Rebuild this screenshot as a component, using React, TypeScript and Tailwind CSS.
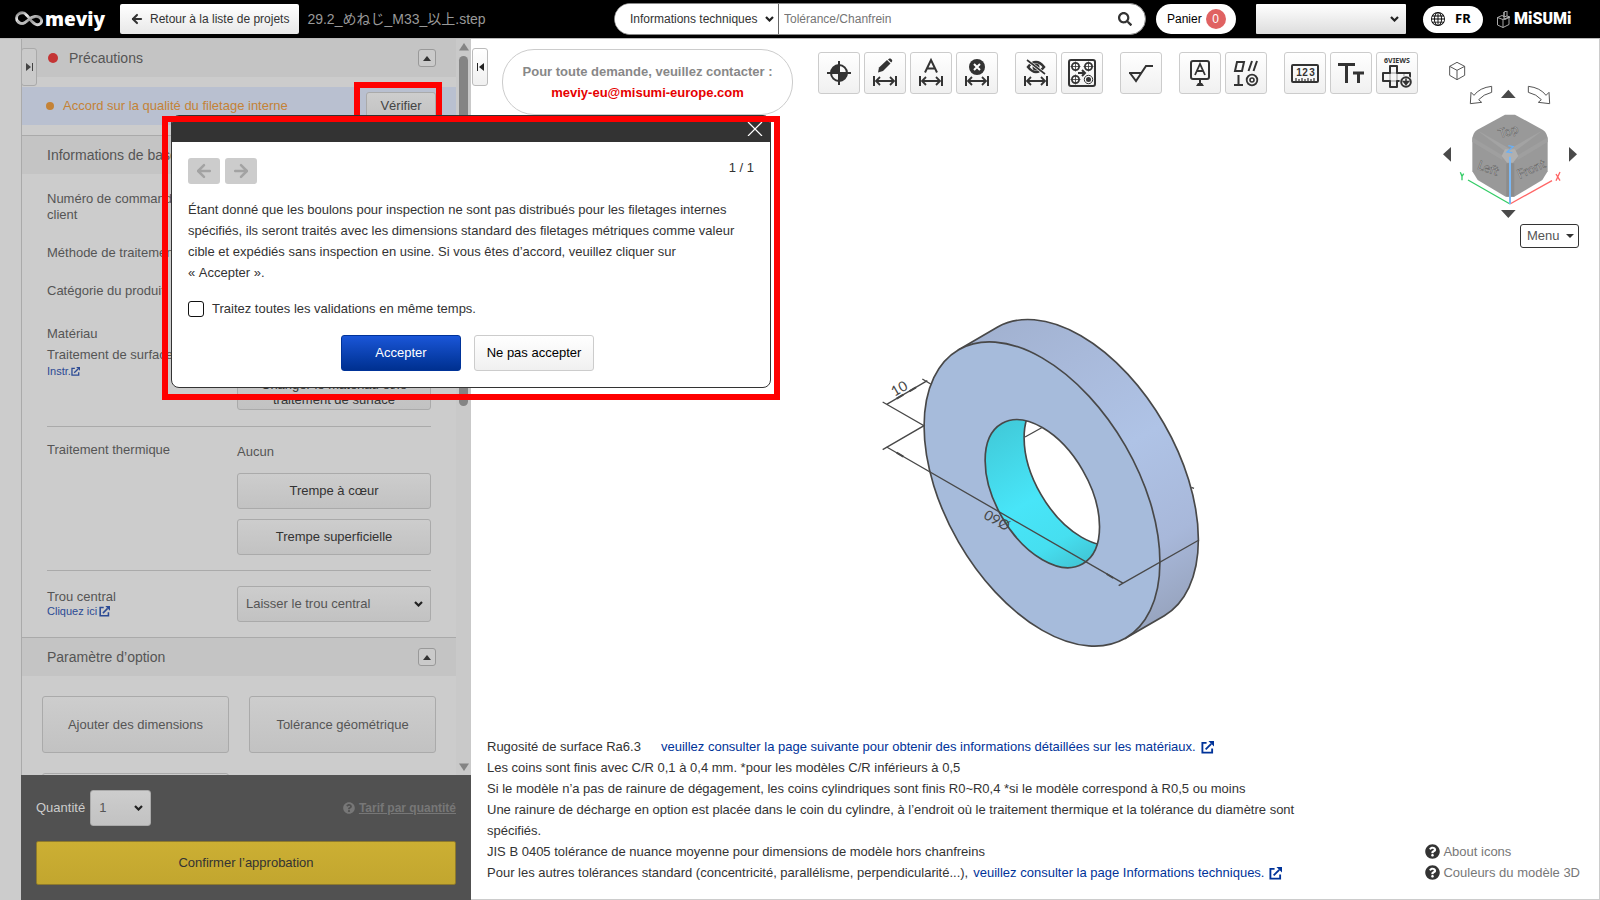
import React from 'react';
import { ArrowLeft, ArrowRight } from 'lucide-react';
import { FaQuestionCircle, FaSearch } from 'react-icons/fa';
import { BsGlobe } from 'react-icons/bs';

const INK = '#333333';

interface ToolButtonProps {
  label: string;
  children: React.ReactNode;
}

const ToolButton: React.FC<ToolButtonProps> = ({ label, children }) => (
  <button
    type="button"
    aria-label={label}
    className="w-[42px] h-[42px] shrink-0 rounded-[3px] border border-[#cccccc] bg-linear-to-b from-white to-[#f0f0f0]"
  >
    <svg viewBox="0 0 40 40" className="w-10 h-10" fill="none" stroke={INK} strokeWidth="2">
      {children}
    </svg>
  </button>
);

// Double-headed dimension arrow shared by several tools
const Span: React.FC = () => (
  <g strokeWidth="1.8">
    <path d="M9 23v10M31 23v10" strokeWidth="2" />
    <path d="M11 28h18M15 24l-4 4 4 4M25 24l4 4-4 4" />
  </g>
);

const MiniTarget: React.FC<{ x: number; y: number }> = ({ x, y }) => (
  <g strokeWidth="1.2">
    <circle cx={x} cy={y} r="3.6" strokeWidth="1.8" />
    <path d={`M${x - 5} ${y}h10M${x} ${y - 5}v10`} strokeWidth="0.8" />
  </g>
);

const ExternalIcon: React.FC<{ className: string }> = ({ className }) => (
  <svg viewBox="0 0 14 14" className={className} fill="none" stroke="currentColor" strokeWidth="2" aria-hidden="true">
    <path d="M6 2H1.500v10.500H12V8" />
    <path d="M5 9l6-6" />
    <path d="M8 0h6v6z" fill="currentColor" stroke="none" />
  </svg>
);

interface SelectProps {
  option: string;
  className: string;
  chevronClass: string;
  id?: string;
  label?: string;
}

const Select: React.FC<SelectProps> = ({ option, className, chevronClass, id, label }) => (
  <span className="relative flex shrink-0 items-center">
    <select id={id} aria-label={label} className={`appearance-none ${className}`}>
      <option>{option}</option>
    </select>
    <svg
      viewBox="0 0 9 6"
      className={`pointer-events-none absolute h-[6px] w-[9px] ${chevronClass}`}
      fill="none"
      stroke="#222"
      strokeWidth="2.2"
      aria-hidden="true"
    >
      <path d="M1 1l3.500 3.500L8 1" />
    </svg>
  </span>
);

const Header: React.FC = () => (
  <header className="flex h-[38px] shrink-0 items-center bg-black pl-[15px] pr-7 text-xs">
    <a href="#home" className="flex w-[90px] items-center gap-[2px] text-white">
      <svg viewBox="0 0 28 16" className="h-4 w-7 shrink-0" fill="none" aria-hidden="true">
        <defs>
          <linearGradient id="ribbon" x1="0" y1="0" x2="1" y2="1">
            <stop offset="0" stopColor="#777" />
            <stop offset=".3" stopColor="#eee" />
            <stop offset=".6" stopColor="#999" />
            <stop offset="1" stopColor="#ddd" />
          </linearGradient>
        </defs>
        <path d="M9 2C5 1 1.500 3.500 1.500 7S4 13 8 12.500 14 6 20 5.500s8 4.500 5.500 7-6 .500-8.500-2S12 3.500 9 2Z" stroke="url(#ribbon)" strokeWidth="2.800" />
        <path d="M2.500 9.500C5 13.500 9 13 12 10" stroke="#bbb" strokeWidth="2.400" />
      </svg>
      <span className="font-['Open_Sans',sans-serif] text-[19px] leading-6 font-extrabold">meviy</span>
    </a>
    <button
      type="button"
      className="ml-[15px] flex h-[30px] items-center gap-[6px] rounded-[2px] bg-linear-to-b from-white to-[#e8e8e8] px-[10px] text-[#333]"
    >
      <ArrowLeft className="h-[14px] w-[14px]" strokeWidth={3.500} />
      Retour à la liste de projets
    </button>
    <span className="ml-2 text-sm whitespace-nowrap text-[#999]">29.2_めねじ_M33_以上.step</span>

    <form className="ml-auto flex h-8 w-[532px] items-center overflow-hidden rounded-full border border-[#888] bg-white">
      <Select
        label="Type de recherche"
        option="Informations techniques"
        className="h-[30px] w-[164px] border-r border-[#666] bg-white pl-[15px] text-[#333]"
        chevronClass="right-[5px]"
      />
      <input
        type="text"
        aria-label="Rechercher"
        placeholder="Tolérance/Chanfrein"
        className="h-full min-w-0 flex-1 pl-[5px] outline-none placeholder:text-[#757575]"
      />
      <button type="button" aria-label="Lancer la recherche" className="mr-[13px] text-[#333]">
        <FaSearch className="h-[14px] w-[14px]" />
      </button>
    </form>

    <a href="#cart" className="ml-[10px] mr-5 flex h-[30px] w-20 items-center gap-1 rounded-full bg-white pl-[11px] text-black">
      Panier
      <span className="flex h-5 w-5 items-center justify-center rounded-full bg-[#e06262] text-white">0</span>
    </a>
    <Select
      label="Compte"
      option=""
      className="h-[30px] w-[150px] rounded-[1px] bg-linear-to-b from-white to-[#dddddd] text-black"
      chevronClass="right-[7px]"
    />
    <button type="button" className="ml-[17px] flex h-[27px] w-[60px] items-center gap-[10px] rounded-full bg-white pl-2 font-['Noto_Sans',sans-serif] text-[13px] font-bold text-black">
      <BsGlobe className="h-[14px] w-[14px]" />
      FR
    </button>
    <a href="#misumi" className="ml-[14px] flex w-[75px] items-center gap-[3px] text-white">
      <svg viewBox="0 0 14 17" className="h-[17px] w-[14px] shrink-0" fill="none" stroke="#bbb" strokeWidth="0.9" aria-hidden="true">
        <path d="M.500 6.500 6 8.500v8L.500 14zM6 8.500l6-2.500v7.500l-6 3M.500 6.500 5 4.500l2 1M7 1l3-1v5l3 1-5 2.500-1-.500zM7 1v5l3-1" />
      </svg>
      <span className="font-['Roboto',sans-serif] text-base leading-5 font-black">MiSUMi</span>
    </a>
  </header>
);

const SectionHeader: React.FC<{ title: string; dot?: boolean; toggle?: boolean }> = ({ title, dot, toggle }) => (
  <div className="flex h-[38px] items-center bg-[#c4c4c4] pr-5 pl-[25px] text-sm text-[#555]">
    {dot && <span className="mr-[11px] ml-px h-[10px] w-[10px] rounded-full bg-[#c43434]" />}
    <h2>{title}</h2>
    {toggle && (
      <button
        type="button"
        aria-label={`Replier ${title}`}
        className="ml-auto flex h-[18px] w-[18px] items-center justify-center rounded-[3px] border border-[#999] bg-[#cacaca]"
      >
        <svg viewBox="0 0 8 5" className="h-[5px] w-2"><path d="M4 0l4 5H0z" fill="#333" /></svg>
      </button>
    )}
  </div>
);

const PanelButton: React.FC<{ className: string; children?: React.ReactNode }> = ({ className, children }) => (
  <button
    type="button"
    className={`rounded-[3px] border border-[#aaaaaa] bg-linear-to-b from-[#cdcdcd] to-[#c2c2c2] ${className}`}
  >
    {children}
  </button>
);

const SidePanel: React.FC = () => (
  <aside className="relative flex w-[450px] shrink-0 flex-col bg-[#cccccc] text-[13px] leading-4 text-[#555]">
    <button
      type="button"
      aria-label="Ouvrir le volet"
      className="absolute top-[9px] left-0 z-10 flex h-[38px] w-4 items-center justify-center rounded-[3px] border border-[#aaa] bg-[#cacaca]"
    >
      <svg viewBox="0 0 7 8" className="h-2 w-[7px]"><path d="M0 0l5 4-5 4zM6 0h1v8H6z" fill="#444" /></svg>
    </button>

    <div className="flex min-h-0 flex-1">
      <div className="flex-1 overflow-hidden border-l border-[#aaaaaa]">
        <SectionHeader title="Précautions" dot toggle />
        <div className="mt-[10px] flex h-[38px] items-center bg-[#b9c0d0] pr-5 pl-6 text-[#c48236]">
          <span className="mr-[9px] h-2 w-2 rounded-full bg-[#c48236]" />
          Accord sur la qualité du filetage interne
          <PanelButton className="ml-auto h-7 w-[70px] text-[#444]">Vérifier</PanelButton>
        </div>

        <section className="mt-[10px] border-t border-[#aaaaaa]">
          <SectionHeader title="Informations de base" toggle />
          <div className="px-[25px] pt-[17px] pb-[15px]">
            <dl>
              <dt className="w-[150px]">Numéro de commande client</dt>
              <dt className="mt-[22px]">Méthode de traitement</dt>
              <dt className="mt-[22px]">Catégorie du produit</dt>
            </dl>
            <div className="mt-[27px] flex justify-between border-b border-[#aaaaaa] pb-4">
              <div>
                <p>Matériau</p>
                <p className="mt-[5px]">Traitement de surface</p>
                <a href="#instructions" className="flex items-center text-[11px] text-[#2b4a94]">
                  Instr.
                  <ExternalIcon className="h-[9px] w-[9px]" />
                </a>
              </div>
              <PanelButton className="mt-[31px] h-[53px] w-[194px] px-5 pt-4 leading-[15px] text-[#333]">
                Changer le matériau et/le traitement de surface
              </PanelButton>
            </div>
            <div className="flex justify-between border-b border-[#aaaaaa] pt-[15px] pb-[15px]">
              <p>Traitement thermique</p>
              <div className="flex w-[194px] flex-col gap-[10px] text-[#333]">
                <p className="mt-[2px] mb-[3px] text-[#555]">Aucun</p>
                <PanelButton className="h-9">Trempe à cœur</PanelButton>
                <PanelButton className="h-9">Trempe superficielle</PanelButton>
              </div>
            </div>
            <div className="flex justify-between pt-[15px]">
              <div className="pt-[3px]">
                <label htmlFor="center-hole" className="block">Trou central</label>
                <a href="#center-hole-help" className="flex items-center gap-[2px] text-[11px] leading-3 text-[#2b4a94]">
                  Cliquez ici
                  <ExternalIcon className="h-[11px] w-[11px]" />
                </a>
              </div>
              <Select
                id="center-hole"
                option="Laisser le trou central"
                className="h-9 w-[194px] rounded-[3px] border border-[#aaaaaa] bg-linear-to-b from-[#cdcdcd] to-[#c2c2c2] pl-2 text-[#555]"
                chevronClass="right-2"
              />
            </div>
          </div>
        </section>

        <section className="border-t border-[#aaaaaa]">
          <SectionHeader title="Paramètre d’option" toggle />
          <div className="grid grid-cols-2 gap-5 px-5 py-5">
            <PanelButton className="h-[57px]">Ajouter des dimensions</PanelButton>
            <PanelButton className="h-[57px]">Tolérance géométrique</PanelButton>
            <PanelButton className="h-[57px]" />
          </div>
        </section>
      </div>

      {/* scroll track */}
      <div className="flex w-[15px] shrink-0 flex-col items-center bg-[#c9c9c9] py-1">
        <svg viewBox="0 0 10 8" className="h-2 w-[10px]"><path d="M5 0l5 7.500H0z" fill="#848484" /></svg>
        <div className="mt-[5px] h-[350px] w-[9px] rounded-full bg-[#848484]" />
        <svg viewBox="0 0 10 8" className="mt-auto h-2 w-[10px]"><path d="M5 8l5-7.500H0z" fill="#848484" /></svg>
      </div>
    </div>

    <div className="h-[125px] shrink-0 bg-[#515151] px-[15px] pt-[15px]">
      <div className="flex h-9 items-center">
        <label htmlFor="quantity" className="mr-[5px] text-[#cccccc]">Quantité</label>
        <Select
          id="quantity"
          option="1"
          className="h-9 w-[61px] rounded-[3px] border border-[#aaa] bg-linear-to-b from-[#cdcdcd] to-[#c2c2c2] pl-2 text-[#555]"
          chevronClass="right-2"
        />
        <a href="#pricing" className="ml-auto flex items-center gap-1 text-xs font-bold text-[#777]">
          <FaQuestionCircle className="h-3 w-3" />
          <span className="underline">Tarif par quantité</span>
        </a>
      </div>
      <button
        type="button"
        className="mt-[15px] h-11 w-full rounded-[2px] border border-[#8e7a2c] bg-linear-to-b from-[#ccaf33] to-[#c2a62f] text-[#333]"
      >
        Confirmer l’approbation
      </button>
    </div>
  </aside>
);

const Toolbar: React.FC = () => (
  <div className="mt-[13px] ml-[25px] flex gap-[17px]">
    <div className="flex gap-1">
      <ToolButton label="Origine">
        <circle cx="20" cy="20" r="8" />
        <path d="M20 20V12A8 8 0 0 0 12 20zM20 20h8a8 8 0 0 1-8 8z" fill={INK} stroke="none" />
        <path d="M8 20h24M20 8v24" />
      </ToolButton>
      <ToolButton label="Modifier la cote">
        <path d="M13 19.500l1-5 8-7.500 3.500 3.500-7.500 7.500z" fill={INK} stroke="none" />
        <path d="M23 6.500l1-.800c1.500-1 4 1.300 3 2.800l-.800 1z" fill={INK} stroke="none" />
        <Span />
      </ToolButton>
      <ToolButton label="Texte de cote">
        <path d="M14 19.500 20 7l6 12.500M16.500 15.500h7" />
        <Span />
      </ToolButton>
      <ToolButton label="Supprimer la cote">
        <circle cx="20" cy="14" r="8" fill={INK} stroke="none" />
        <path d="M17 11l6 6M23 11l-6 6" stroke="#fff" />
        <Span />
      </ToolButton>
    </div>
    <div className="flex gap-1">
      <ToolButton label="Masquer les cotes">
        <path d="M12 14q8-10 16 0-8 10-16 0z" strokeWidth="2.500" />
        <circle cx="20" cy="14" r="3.500" fill={INK} stroke="none" />
        <path d="M12 8l17 13" stroke="#fff" strokeWidth="3" />
        <path d="M11 7l18 14" strokeWidth="1.600" />
        <Span />
      </ToolButton>
      <ToolButton label="Regrouper les trous">
        <rect x="7" y="7" width="26" height="26" rx="2" />
        <MiniTarget x={13.500} y={13.500} />
        <MiniTarget x={26.500} y={13.500} />
        <MiniTarget x={13.500} y={26.500} />
        <circle cx="26.500" cy="26.500" r="4.200" strokeWidth="1" />
        <circle cx="26.500" cy="26.500" r="2.500" fill={INK} stroke="none" />
        <path d="M16 20h7M20 17l3 3-3 3" />
      </ToolButton>
    </div>
    <ToolButton label="Rugosité">
      <path d="M8 20h12M9 20l6 8L25 13h7" />
    </ToolButton>
    <div className="flex gap-1">
      <ToolButton label="Référence">
        <rect x="11" y="8" width="18" height="18" rx="2" />
        <path d="M15 22l5-11 5 11M17 18h6" strokeWidth="1.800" />
        <path d="M20 26v4" />
        <path d="M16 33l2-3h4l2 3z" fill={INK} stroke="none" />
      </ToolButton>
      <ToolButton label="Tolérance géométrique">
        <path d="M11 9h7l-2 9H9zM26 8l-3.500 10M31 8l-3.500 10M12.500 22v10M8 32h9" />
        <circle cx="26" cy="27" r="5.300" strokeWidth="1.800" />
        <circle cx="26" cy="27" r="2" strokeWidth="1.600" />
      </ToolButton>
    </div>
    <div className="flex gap-1">
      <ToolButton label="Mesurer">
        <rect x="7" y="12" width="26" height="17" rx="1" />
        <path d="M11 28v-3M14 28v-2M17 28v-3M20 28v-2M23 28v-3M26 28v-2M29 28v-3" strokeWidth="1.200" />
        <g fontSize="10" fontWeight="700" textAnchor="middle" fill={INK} stroke="none">
          <text x="14" y="23">1</text>
          <text x="20" y="23">2</text>
          <text x="27" y="23">3</text>
        </g>
      </ToolButton>
      <ToolButton label="Taille du texte">
        <path d="M7 11.500h17M15.500 11.500V30M22 20h11M27.500 20v10" strokeWidth="3" />
      </ToolButton>
      <ToolButton label="Six vues">
        <text x="20" y="10" textAnchor="middle" fontSize="7" fontWeight="700" fontFamily="Noto Sans" fill={INK} stroke="none">6VIEWS</text>
        <path d="M13 20v-7h7v7h13v8H20v6h-7v-6H6v-8z" strokeLinejoin="round" />
        <path d="M13 20h7v8h-7zM27 20v4" strokeWidth="0.500" />
        <circle cx="29" cy="29" r="6.500" fill="#f3f3f3" stroke="none" />
        <circle cx="29" cy="29" r="4.800" />
        <path d="M29 25.500v5M26.500 28.500l2.500 3 2.500-3z" fill={INK} strokeWidth="1.500" />
      </ToolButton>
    </div>
  </div>
);

const ViewCube: React.FC = () => (
  <svg viewBox="1020 180 414 480" className="h-40 w-[138px]" role="img" aria-label="Orientation de la vue">
    <g fill="none" stroke="#555" strokeWidth="3" strokeLinejoin="round">
      <path d="M1068 187l23 12v27l-23 13-22-13v-27zM1046 199l22 12 23-12M1068 211v28" />
      <path d="M1172 259q-36 4-53 27l-9-9-2 34 34-4-9-8q14-16 39-22z" />
      <path d="M1282 259q36 4 53 27l9-9 2 34-34-4 9-8q-14-16-39-22z" />
    </g>
    <g fill="#4a4a4a">
      <path d="M1222 269l22 25h-44zM1222 654l22-24h-44zM1026 463l24-22v44zM1428 463l-24-22v44z" />
    </g>
    <path d="M1212 344h30l84 46q14 10 14 30v94l-16 26-84 50h-26l-84-50-16-26v-94q0-20 14-30z" fill="#999" />
    <path d="M1130 392l82 62 14-8-84-48zM1324 392l-82 62-14-8 84-48z" fill="#a3a3a3" />
    <path d="M1114 412l90 54v14l-90-54zM1340 412l-90 54v14l90-54z" fill="#9f9f9f" />
    <path d="M1216 490h24v100h-24z" fill="#8c8c8c" />
    <path d="M1212 448h30l10 20-16 20h-18l-16-20z" fill="#b0b0b0" />
    <g fill="#ccc" stroke="#5a5a5a" strokeWidth="1.500" fontSize="38" fontFamily="Lato" textAnchor="middle">
      <text x="1224" y="406" transform="rotate(-18 1226 400)">Top</text>
      <text x="1162" y="518" transform="rotate(20 1162 505)">Left</text>
      <text x="1290" y="520" transform="rotate(-24 1290 505)">Front</text>
    </g>
    <g fill="none" strokeWidth="4">
      <path d="M1227 612l-126-72" stroke="#3c6" />
      <path d="M1227 612l126-70" stroke="#f66" />
      <path d="M1227 612V470" stroke="#7ab8f5" strokeWidth="6" />
      <path d="M1222 437l14 3-18 16 16 2" stroke="#6ab0f5" />
      <path d="M1078 517l5 12 5-8M1083 529v12" stroke="#3c6" />
      <path d="M1365 522l12 20M1377 516l-12 26" stroke="#f66" />
    </g>
  </svg>
);

const ModelView: React.FC = () => (
  <svg viewBox="0 0 1080 1080" className="h-[360px] w-[360px]" role="img" aria-label="Modèle 3D de la bague">
    <defs>
      <linearGradient id="rim" gradientUnits="userSpaceOnUse" x1="413" y1="81" x2="913" y2="947">
        <stop offset="0" stopColor="#a2b2d1" />
        <stop offset=".2" stopColor="#a8b9da" />
        <stop offset=".5" stopColor="#afc3e6" />
        <stop offset=".8" stopColor="#a8b8da" />
        <stop offset="1" stopColor="#98a5c0" />
      </linearGradient>
      <linearGradient id="bore" gradientUnits="userSpaceOnUse" x1="426" y1="371" x2="668" y2="792">
        <stop offset="0" stopColor="#41cbda" />
        <stop offset=".5" stopColor="#48e5f8" />
        <stop offset=".8" stopColor="#46dff0" />
        <stop offset="1" stopColor="#41c6d6" />
      </linearGradient>
      <clipPath id="hole">
        <ellipse cx="547" cy="581" rx="243" ry="140" transform="rotate(60 547 581)" />
      </clipPath>
    </defs>
    <g stroke="#484848" strokeWidth="5">
      <path d="M296 149 413 81A500 289 60 0 1 913 947L796 1015Z" fill="url(#rim)" />
      <ellipse cx="546" cy="582" rx="500" ry="289" transform="rotate(60 546 582)" fill="#a6bbdb" />
      <g clipPath="url(#hole)">
        <rect x="350" y="340" width="400" height="480" fill="url(#bore)" stroke="none" />
        <ellipse cx="664" cy="513" rx="243" ry="140" transform="rotate(60 664 513)" fill="#fff" />
        <path d="M495 411l54-30" strokeWidth="4" />
      </g>
      <ellipse cx="547" cy="581" rx="243" ry="140" transform="rotate(60 547 581)" fill="none" />
    </g>
    <g fill="none" stroke="#484848" strokeWidth="4">
      <path d="M68 306l124 71-124 72M80 313l122-71M187 237l25 15" />
      <path d="M80 441l710 409M776 857l241-137M994 562l8 3" />
      <path d="M110 296l20-12M148 274l20-12M110 458l20 12M740 822l20 12" strokeWidth="6" />
    </g>
    <g fill="#484848" fontSize="42" fontFamily="Lato" textAnchor="middle">
      <text x="118" y="280" transform="rotate(-30 118 266)">10</text>
      <text x="412" y="674" transform="rotate(210 412 660)">Ø60</text>
    </g>
  </svg>
);

const Notes: React.FC = () => (
  <div className="max-w-[830px] text-[13px] leading-[21px] text-[#333]">
    <p>
      Rugosité de surface Ra6.3
      <a href="#materials" className="ml-5 text-[#003399]">
        veuillez consulter la page suivante pour obtenir des informations détaillées sur les matériaux.
        <ExternalIcon className="ml-[5px] inline h-[13px] w-[13px]" />
      </a>
    </p>
    <p>Les coins sont finis avec C/R 0,1 à 0,4 mm. *pour les modèles C/R inférieurs à 0,5</p>
    <p>Si le modèle n’a pas de rainure de dégagement, les coins cylindriques sont finis R0~R0,4 *si le modèle correspond à R0,5 ou moins</p>
    <p>Une rainure de décharge en option est placée dans le coin du cylindre, à l’endroit où le traitement thermique et la tolérance du diamètre sont spécifiés.</p>
    <p>JIS B 0405 tolérance de nuance moyenne pour dimensions de modèle hors chanfreins</p>
    <p>
      Pour les autres tolérances standard (concentricité, parallélisme, perpendicularité...),
      <a href="#technical" className="ml-[5px] text-[#003399]">
        veuillez consulter la page Informations techniques.
        <ExternalIcon className="ml-[5px] inline h-[13px] w-[13px]" />
      </a>
    </p>
  </div>
);

const Workspace: React.FC = () => (
  <main className="flex min-w-0 flex-1 flex-col border-r border-b border-[#cccccc] bg-white">
    <div className="flex items-start">
      <button
        type="button"
        aria-label="Replier le volet"
        className="mt-[9px] ml-px flex h-[38px] w-4 shrink-0 items-center justify-center rounded-[3px] border border-[#bbb] bg-linear-to-b from-white to-[#f0f0f0]"
      >
        <svg viewBox="0 0 7 8" className="h-2 w-[7px]"><path d="M7 0L2 4l5 4zM0 0h1v8H0z" fill="#222" /></svg>
      </button>
      <div className="mt-[10px] ml-[14px] flex h-[66px] w-[291px] shrink-0 flex-col items-center justify-center rounded-[32px] border border-[#cccccc] text-[13px] leading-[21px] font-bold text-[#888]">
        <p>Pour toute demande, veuillez contacter :</p>
        <a href="mailto:meviy-eu@misumi-europe.com" className="text-[#e60000]">meviy-eu@misumi-europe.com</a>
      </div>
      <Toolbar />
      <div className="mt-[21px] mr-5 ml-auto flex flex-col items-end gap-1">
        <ViewCube />
        <button type="button" className="flex h-6 w-[59px] items-center justify-between rounded-[3px] border border-[#333] bg-white pr-1 pl-[6px] text-[13px] text-[#555]">
          Menu
          <svg viewBox="0 0 8 4" className="h-1 w-2"><path d="M0 0h8L4 4z" fill="#333" /></svg>
        </button>
      </div>
    </div>

    <div className="flex min-h-0 flex-1 items-center justify-center pb-6 pl-[10px]">
      <ModelView />
    </div>

    <div className="flex items-end justify-between pr-[19px] pb-4 pl-4">
      <Notes />
      <div className="text-[13px] leading-[21px] text-[#777]">
        <a href="#icons" className="flex items-center gap-[3px]">
          <FaQuestionCircle className="h-[15px] w-[15px] text-[#333]" />
          About icons
        </a>
        <a href="#colours" className="flex items-center gap-[3px]">
          <FaQuestionCircle className="h-[15px] w-[15px] text-[#333]" />
          Couleurs du modèle 3D
        </a>
      </div>
    </div>
  </main>
);

const ApprovalDialog: React.FC = () => (
  <div
    role="dialog"
    aria-label="Accord sur la qualité du filetage interne"
    className="absolute top-[115px] left-[171px] z-20 w-[600px] overflow-hidden rounded-lg border border-[#333] bg-white text-[13px] text-[#333]"
  >
    <div className="flex h-[26px] items-start justify-end bg-[#333] pt-1 pr-[7px]">
      <button type="button" aria-label="Fermer">
        <svg viewBox="0 0 16 16" className="h-4 w-4" stroke="#fff" strokeWidth="1.200"><path d="M1 2l14 14M15 2L1 16" /></svg>
      </button>
    </div>
    <div className="px-4 pt-4 pb-4">
      <div className="flex items-start gap-[5px]">
        <button type="button" disabled aria-label="Précédent" className="flex h-[26px] w-8 items-center justify-center rounded-[3px] bg-[#cccccc] text-[#a3a3a3]">
          <ArrowLeft className="h-5 w-5" strokeWidth={3} />
        </button>
        <button type="button" disabled aria-label="Suivant" className="flex h-[26px] w-8 items-center justify-center rounded-[3px] bg-[#cccccc] text-[#a3a3a3]">
          <ArrowRight className="h-5 w-5" strokeWidth={3} />
        </button>
        <span className="ml-auto leading-5">1 / 1</span>
      </div>
      <p className="mt-[15px] leading-[21px]">
        Étant donné que les boulons pour inspection ne sont pas distribués pour les filetages internes spécifiés, ils
        seront traités avec les dimensions standard des filetages métriques comme valeur cible et expédiés sans
        inspection en usine. Si vous êtes d’accord, veuillez cliquer sur «&nbsp;Accepter&nbsp;».
      </p>
      <label className="mt-[18px] flex h-4 items-center gap-2">
        <input type="checkbox" className="h-4 w-4 appearance-none rounded-[3px] border border-[#111] bg-white" />
        Traitez toutes les validations en même temps.
      </label>
      <div className="mt-[18px] flex justify-center gap-[13px] pr-[7px]">
        <button type="button" className="h-9 w-[120px] rounded-[3px] border border-[#003399] bg-linear-to-b from-[#1a56d8] to-[#003090] text-white">
          Accepter
        </button>
        <button type="button" className="h-9 w-[120px] rounded-[3px] border border-[#cccccc] bg-linear-to-b from-white to-[#f0f0f0] text-black">
          Ne pas accepter
        </button>
      </div>
    </div>
  </div>
);

const App: React.FC = () => {
  return (
    <div className="relative flex h-screen flex-col overflow-hidden bg-[#cccccc] font-['Liberation_Sans','Noto_Sans_CJK_JP',sans-serif]">
      <Header />
      <div className="flex min-h-0 flex-1 border-t border-[#bbb] pl-[21px]">
        <SidePanel />
        <Workspace />
      </div>
      <ApprovalDialog />
      {/* red call-out frames */}
      <div className="pointer-events-none absolute top-[82px] left-[354px] h-[34px] w-[88px] border-6 border-b-0 border-[#ff0000]" />
      <div className="pointer-events-none absolute top-[116px] left-[162px] z-30 h-[284px] w-[618px] border-6 border-[#ff0000]" />
    </div>
  );
};

export default App;
